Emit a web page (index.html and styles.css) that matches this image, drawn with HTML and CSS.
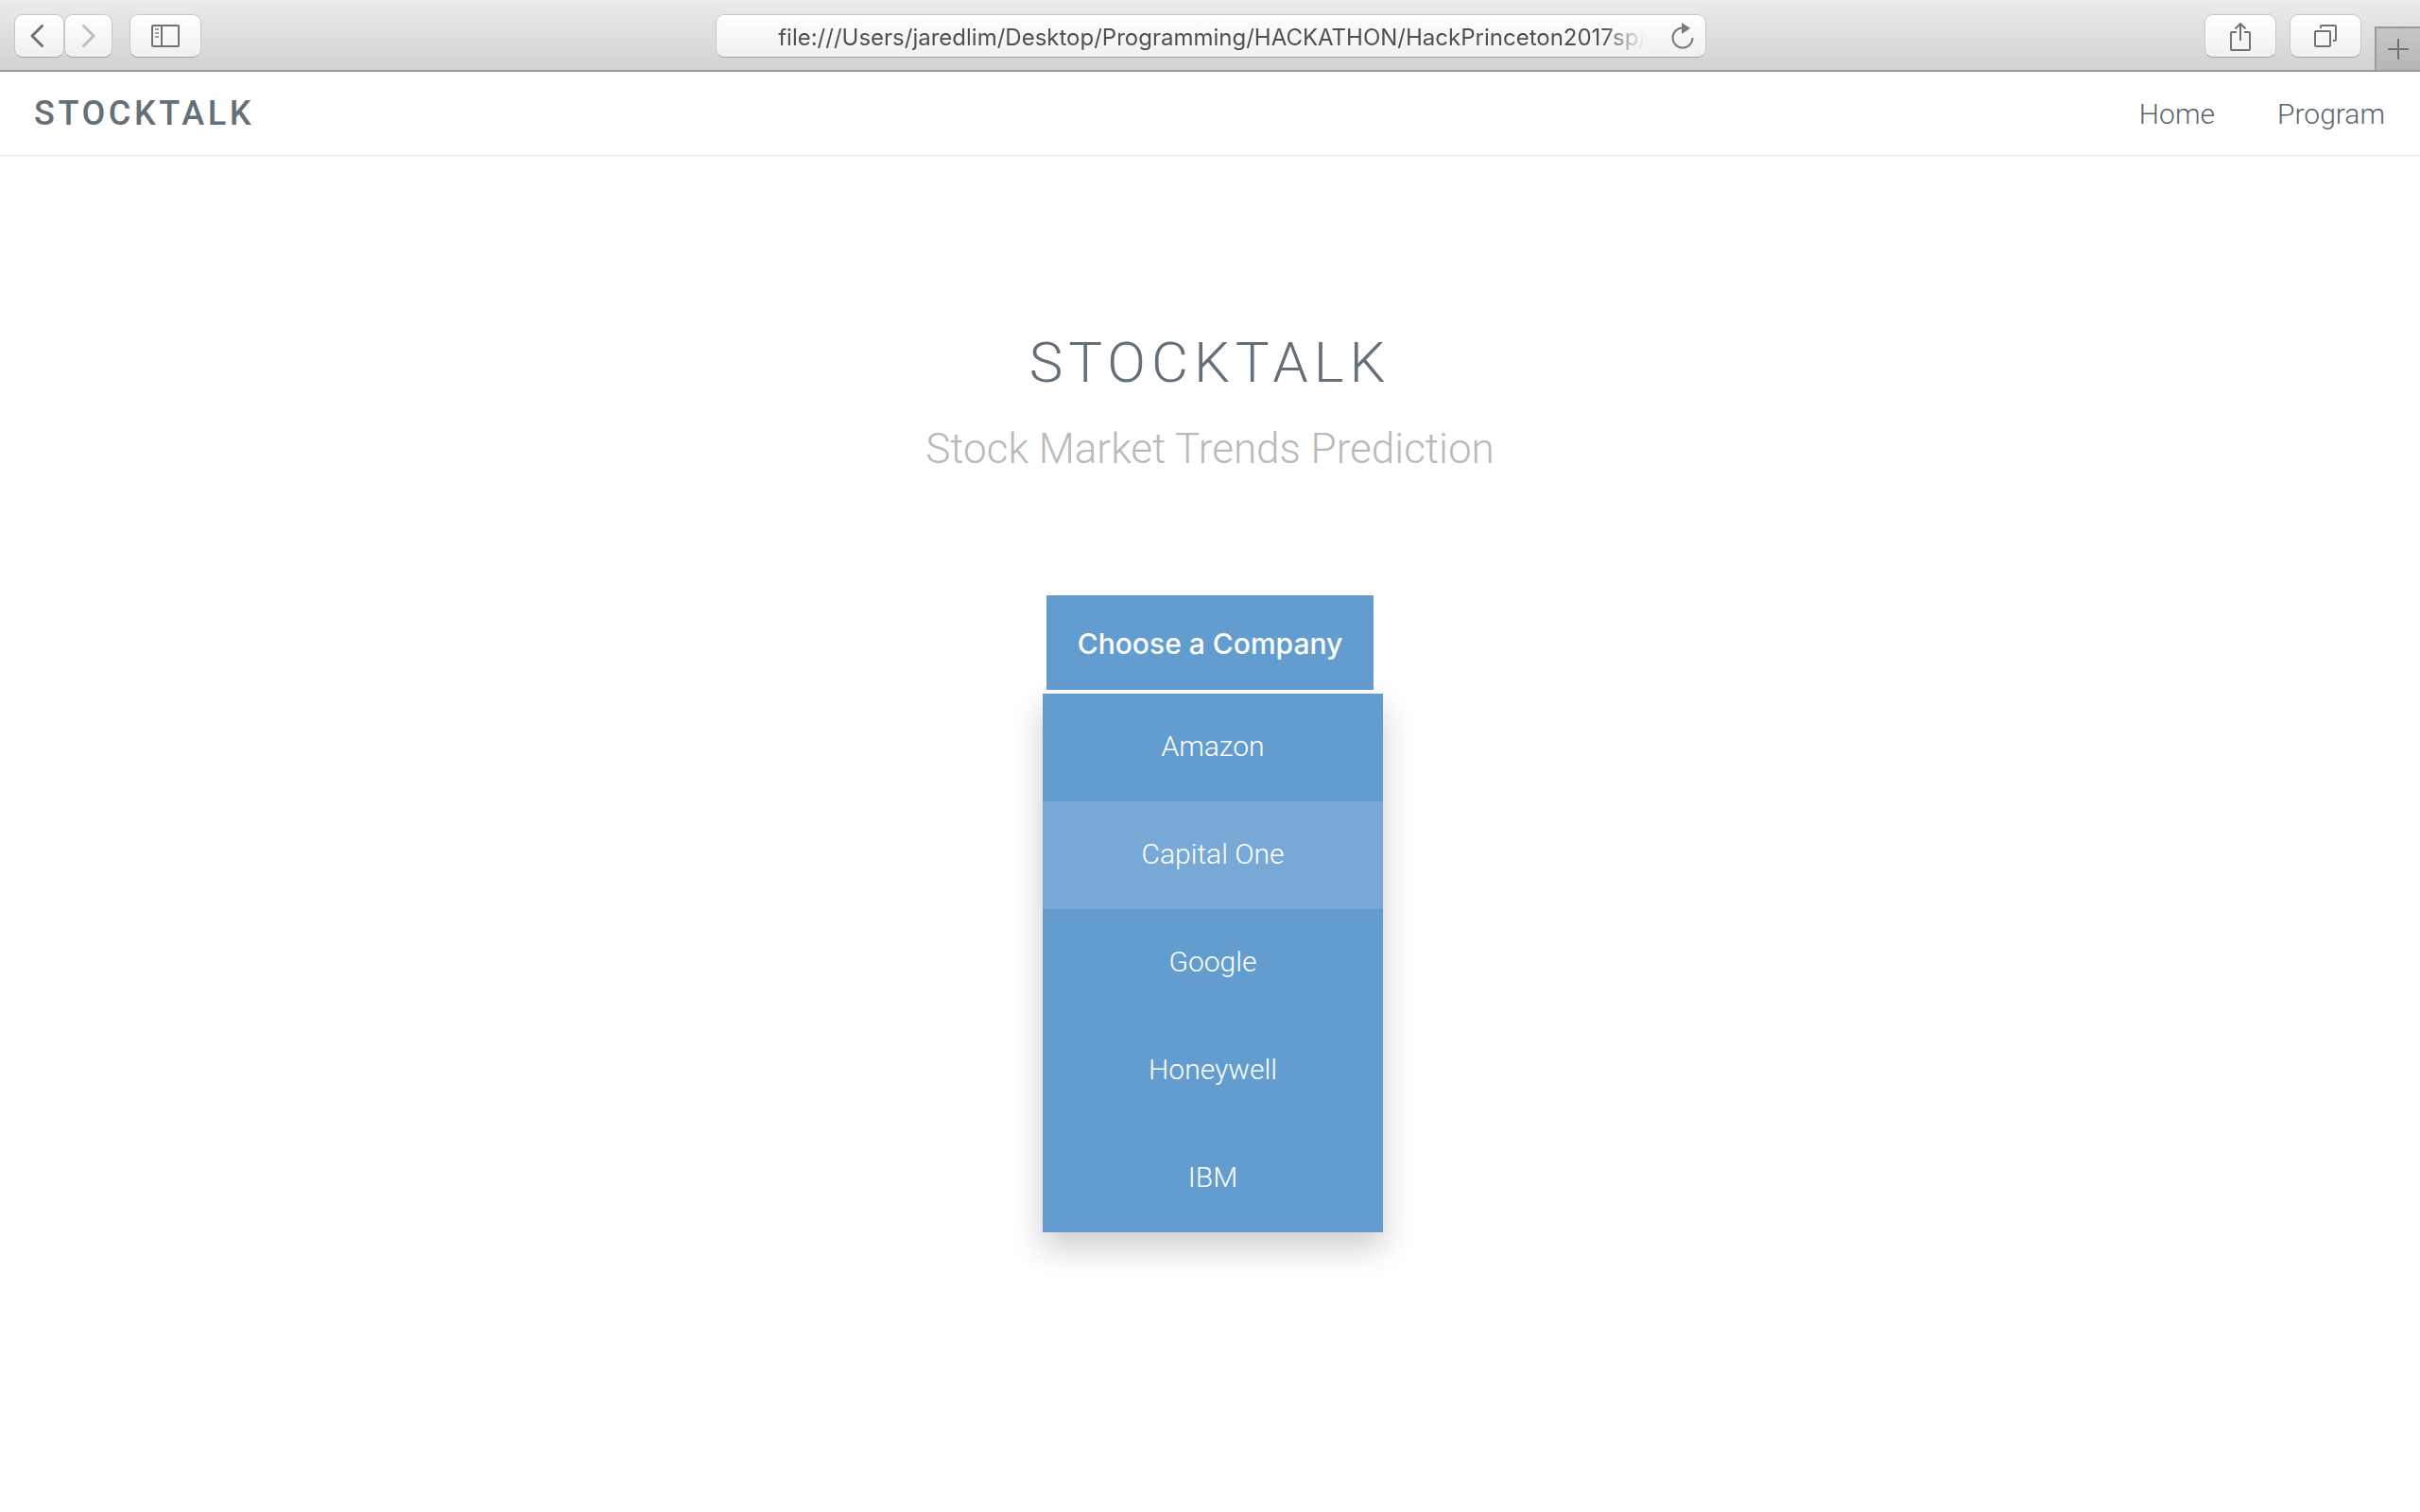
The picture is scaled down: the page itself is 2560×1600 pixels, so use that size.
FILE: index.html
```html
<!DOCTYPE html>
<html lang="en">
<head>
<meta charset="utf-8">
<meta name="viewport" content="width=device-width, initial-scale=1">
<title>StockTalk</title>
<link rel="stylesheet" href="styles.css">
</head>
<body>
<div class="toolbar">
  <div class="toolbar-left">
    <button class="tool tool-back" type="button" aria-label="Back"><svg width="14" height="24" viewBox="0 0 14 24"><path d="M12.500 1.500 2 12l10.500 10.500"/></svg></button>
    <button class="tool tool-forward" type="button" aria-label="Forward" disabled><svg width="14" height="24" viewBox="0 0 14 24"><path d="M1.500 1.500 12 12 1.500 22.500"/></svg></button>
    <button class="tool tool-sidebar" type="button" aria-label="Show sidebar"><svg class="thin" width="30" height="24" viewBox="0 0 30 24"><rect x="1" y="1" width="28" height="22" rx="1"/><path d="M11 1v22"/><path class="faint" d="M4 5h4M4 9h4M4 13h4"/></svg></button>
  </div>
  <div class="address">
    <input class="address-input" type="text" aria-label="Address" value="file:///Users/jaredlim/Desktop/Programming/HACKATHON/HackPrinceton2017sp/website">
    <button class="reload" type="button" aria-label="Reload"><svg width="24" height="28" viewBox="0 0 24 28"><path d="M12 5.500A10.500 10.500 0 1 0 22.500 16"/><path class="solid" d="M11 0v12l9-6z"/></svg></button>
  </div>
  <div class="toolbar-right">
    <button class="tool tool-wide" type="button" aria-label="Share"><svg class="thin" width="24" height="32" viewBox="0 0 24 32"><path d="M8 12H3a1 1 0 0 0-1 1v17a1 1 0 0 0 1 1h18a1 1 0 0 0 1-1V13a1 1 0 0 0-1-1h-5M12 21V3M6.500 8.500 12 3l5.500 5.500"/></svg></button>
    <button class="tool tool-wide" type="button" aria-label="Show all tabs"><svg class="thin" width="24" height="24" viewBox="0 0 24 24"><rect x="1" y="7" width="16" height="16" rx="1"/><path d="M7 4V2a1 1 0 0 1 1-1h14a1 1 0 0 1 1 1v14a1 1 0 0 1-1 1h-2"/></svg></button>
    <button class="new-tab" type="button" aria-label="New tab"><svg class="thin" width="22" height="22" viewBox="0 0 22 22"><path d="M11 0v22M0 11h22"/></svg></button>
  </div>
</div>
<header class="site-header">
  <a class="brand" href="#">STOCKTALK</a>
  <nav class="site-nav">
    <a href="#">Home</a>
    <a href="#">Program</a>
  </nav>
</header>
<main class="hero">
  <h1 class="title">STOCKTALK</h1>
  <p class="subtitle">Stock Market Trends Prediction</p>
  <div class="dropdown">
    <button class="dropdown-button" type="button" aria-expanded="true">Choose a Company</button>
    <div class="dropdown-menu">
      <a href="#">Amazon</a>
      <a class="active" href="#">Capital One</a>
      <a href="#">Google</a>
      <a href="#">Honeywell</a>
      <a href="#">IBM</a>
    </div>
  </div>
</main>
</body>
</html>
```
FILE: styles.css
```css
* { box-sizing: border-box; }
body {
  margin: 0;
  background: #fff;
  color: #656f78;
  font-family: Roboto, "Liberation Sans", sans-serif;
  font-weight: 300;
}
a { color: inherit; text-decoration: none; }
button { margin: 0; padding: 0; border: 0; font: inherit; }
svg { display: block; fill: none; stroke: #727272; stroke-width: 3; stroke-linecap: round; stroke-linejoin: round; }
.thin { stroke-width: 2; stroke-linecap: butt; }
.faint { stroke: #a0a0a0; }
.solid { fill: #7a7a7a; stroke: none; }

/* Browser toolbar */
.toolbar {
  display: grid;
  grid-template-columns: 1fr 41% 1fr;
  height: 76px;
  padding-top: 15px;
  background: linear-gradient(#ebebeb, #d2d2d2);
  border-bottom: 2px solid #9b9b9b;
}
.toolbar-left, .toolbar-right { display: flex; align-items: flex-start; }
.toolbar-left { padding-left: 15px; }
.toolbar-right { justify-content: flex-end; gap: 14px; }
.tool, .address {
  display: flex;
  align-items: center;
  justify-content: center;
  height: 46px;
  border: 1px solid #c8c8c8;
  border-bottom-color: #a2a2a2;
  border-radius: 9px;
  background: linear-gradient(#fff, #f0f0f0);
}
.tool-back { width: 53px; padding-right: 6px; }
.tool-forward { width: 51px; }
.tool-forward svg { stroke: #bebebe; }
.tool-sidebar { width: 76px; margin-left: 18px; }
.tool-wide { width: 76px; }
.new-tab {
  display: flex;
  align-items: center;
  justify-content: center;
  align-self: flex-end;
  width: 48px;
  height: 46px;
  border: solid #9b9b9b;
  border-width: 2px 0 0 2px;
  background: linear-gradient(#c6c6c6, #b6b6b6);
}
.address { margin-left: 2px; padding: 0 12px 0 65px; gap: 28px; }
.address-input {
  flex: 1;
  min-width: 0;
  height: 40px;
  padding: 2px 0 0;
  border: 0;
  outline: 0;
  background: none;
  color: #505050;
  font: 400 24px/38px Inter, "Liberation Sans", sans-serif;
  -webkit-mask-image: linear-gradient(to left, transparent, #000 44px);
  mask-image: linear-gradient(to left, transparent, #000 44px);
}
.reload { background: none; }
.reload svg { stroke: #7a7a7a; stroke-width: 2; stroke-linecap: butt; }

/* Site header */
.site-header {
  display: flex;
  align-items: center;
  justify-content: space-between;
  height: 89px;
  padding: 0 37px 0 36px;
  border-bottom: 1px solid #e8e8e8;
}
.brand { font-size: 36px; font-weight: 500; letter-spacing: 0.1em; }
.site-nav { display: flex; gap: 66px; color: #5a666e; font-size: 30px; }

/* Hero */
.hero { display: flex; flex-direction: column; align-items: center; padding: 183px 32px 296px; text-align: center; }
.title { margin: 0; font-size: 60px; line-height: 72px; font-weight: 300; letter-spacing: 0.1em; }
.subtitle { margin: 28px 0 0; color: #b9b9b9; font-size: 44px; line-height: 54px; }
.dropdown {
  display: flex;
  flex-direction: column;
  gap: 4px;
  width: 346px;
  margin-top: 128px;
}
.dropdown-button {
  height: 100px;
  padding: 2px 32px 0;
  background: #639dcf;
  color: #fff;
  font: 500 30px/40px Inter, "Liberation Sans", sans-serif;
  white-space: nowrap;
}
.dropdown-menu {
  width: 360px;
  margin-left: -4px;
  background: #639dcf;
  box-shadow: 0 16px 32px rgba(0, 0, 0, .2);
  color: #fff;
  font-size: 30px;
}
.dropdown-menu a { display: block; padding: 35px 32px 37px; line-height: 42px; }
.dropdown-menu .active { background: #78a9d6; }
```
